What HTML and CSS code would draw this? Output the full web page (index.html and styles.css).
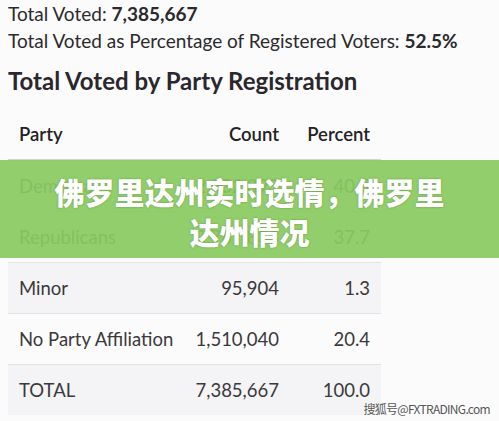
FILE: index.html
```html
<!DOCTYPE html>
<html lang="en">
<head>
<meta charset="utf-8">
<link rel="stylesheet" href="styles.css">
</head>
<body>
<div class="page">
  <p class="stat">Total Voted: <b>7,385,667</b></p>
  <p class="stat">Total Voted as Percentage of Registered Voters: <b>52.5%</b></p>
  <h2 class="title">Total Voted by Party Registration</h2>
  <table class="tbl">
    <thead>
      <tr><th class="party">Party</th><th class="num">Count</th><th class="num pct">Percent</th></tr>
    </thead>
    <tbody>
      <tr class="alt"><td>Democrats</td><td class="num">2,932,393</td><td class="num">40.5</td></tr>
      <tr><td>Republicans</td><td class="num">2,787,833</td><td class="num">37.7</td></tr>
      <tr class="alt"><td>Minor</td><td class="num">95,904</td><td class="num">1.3</td></tr>
      <tr><td>No Party Affiliation</td><td class="num">1,510,040</td><td class="num">20.4</td></tr>
      <tr class="alt"><td>TOTAL</td><td class="num">7,385,667</td><td class="num">100.0</td></tr>
    </tbody>
  </table>
</div>
<div class="banner">佛罗里达州实时选情，佛罗里<br>达州情况</div>
<div class="mark">搜狐号@FXTRADING.com</div>
</body>
</html>
```
FILE: styles.css
```css
html, body { margin: 0; padding: 0; }
body {
  background: #fcfbfc;
  font-family: "Lato", "Open Sans", sans-serif;
  color: #2b2a2d;
  width: 499px;
  height: 421px;
  overflow: hidden;
  position: relative;
}
.page { padding: 0 8px; }
.stat { margin: 0; font-size: 19px; line-height: 27px; }
.stat b { font-weight: 700; }
.title { margin: 12px 0 0; font-size: 24px; font-weight: 700; line-height: 30px; color: #2a282c; }
.tbl {
  margin-top: 13px;
  border-collapse: collapse;
  width: 373px;
  font-size: 18.5px;
}
.tbl th {
  font-weight: 600;
  height: 50px;
  padding: 0 11px;
  border-bottom: 2px solid #d4d3d6;
  text-align: left;
  background: #fcfbfc;
  color: #232225;
}
.tbl th.num, .tbl td.num { text-align: right; }
.tbl th.pct { width: 69px; }
.tbl td {
  height: 50px;
  padding: 0 11px;
  border-bottom: 1px solid #e3e2e5;
  color: #3a393c;
}
.tbl tr.alt td { background: #f4f3f5; }
.tbl tbody tr:last-child td { border-bottom: none; }
.banner {
  position: absolute;
  left: 0;
  top: 160px;
  width: 499px;
  height: 98px;
  box-sizing: border-box;
  padding-top: 11px;
  background: rgba(138, 202, 96, 0.93);
  color: #fff;
  text-align: center;
  font-family: "Noto Sans CJK SC", sans-serif;
  font-weight: 900;
  font-size: 30px;
  line-height: 40px;
  text-shadow: 0 0 2px rgba(60, 90, 40, 0.5);
}
.mark {
  position: absolute;
  right: 9px;
  top: 401px;
  font-family: "Noto Sans CJK SC", sans-serif;
  font-size: 12px;
  line-height: 16px;
  color: #555;
  text-shadow: 0 0 2px #fff, 0 0 2px #fff;
  letter-spacing: -0.7px;
}
```
